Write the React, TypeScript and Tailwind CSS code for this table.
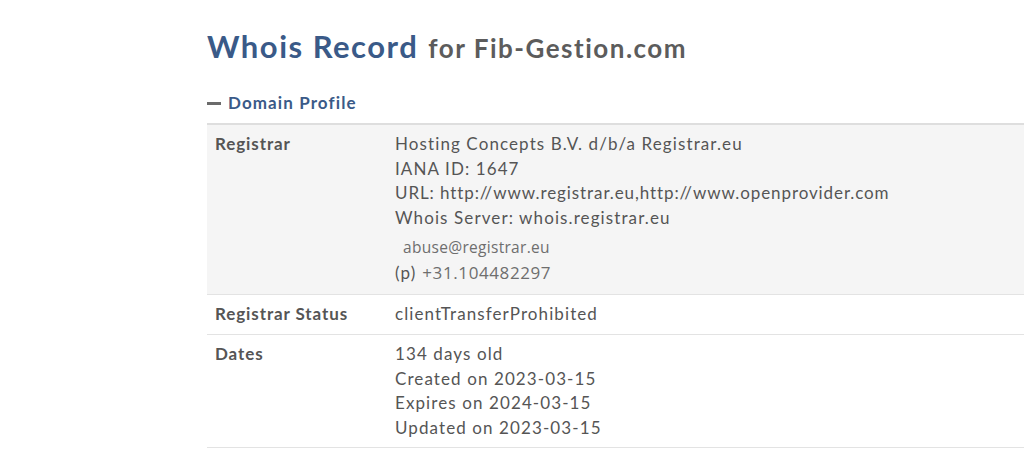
const rows = [
  {
    label: "Registrar Status",
    lines: ["clientTransferProhibited"],
  },
  {
    label: "Dates",
    lines: [
      "134 days old",
      "Created on 2023-03-15",
      "Expires on 2024-03-15",
      "Updated on 2023-03-15",
    ],
  },
];

export default function App() {
  return (
    <div className="min-h-[449px] bg-white font-['Lato',sans-serif] text-[#555]">
      <div className="ml-[207px] pt-[26px]">
        {/* page title */}
        <h1 className="flex items-baseline gap-[10px] leading-[40px]">
          <span className="text-[31px] font-bold tracking-[1.5px] text-[#3a5a88]">Whois Record</span>
          <span className="text-[26px] font-bold tracking-[1.5px] text-[#5c5c5c]">for Fib-Gestion.com</span>
        </h1>

        {/* section toggle */}
        <div className="mt-[25px] flex items-center gap-[7px] text-[17px] font-bold tracking-[1.1px] text-[#3a5a88] leading-[20px]">
          <span className="block h-[3px] w-[14px] bg-[#6b6b6b]" />
          <span>Domain Profile</span>
        </div>

        <div className="mt-[10px] border-t-2 border-[#dedede] text-[17px] tracking-[1.1px]">
          {/* Registrar row */}
          <div className="flex bg-[#f5f5f5] border-b border-[#e3e3e3] pt-[7px] pb-[8px]">
            <div className="w-[188px] shrink-0 pl-[8px] font-bold tracking-[0.9px] leading-[24.6px]">Registrar</div>
            <div className="leading-[24.6px]">
              <div>Hosting Concepts B.V. d/b/a Registrar.eu</div>
              <div>IANA ID: 1647</div>
              <div className="tracking-[0.9px]">URL: http://www.registrar.eu,http://www.openprovider.com</div>
              <div>Whois Server: whois.registrar.eu</div>
              <div className="mt-[5px] pl-[8px] font-['Open_Sans',sans-serif] text-[15.5px] tracking-[0.3px] text-[#6e6e6e] leading-[24px]">
                abuse@registrar.eu
              </div>
              <div className="flex items-center leading-[27px]">
                <span>(p)</span>
                <span className="ml-[6px] font-['Open_Sans',sans-serif] text-[17px] tracking-[0.6px] text-[#6e6e6e]">+31.104482297</span>
              </div>
            </div>
          </div>

          {rows.map((row) => (
            <div key={row.label} className="flex border-b border-[#e3e3e3] pt-[7px] pb-[7px]">
              <div className="w-[188px] shrink-0 pl-[8px] font-bold tracking-[0.9px] leading-[24.6px]">{row.label}</div>
              <div className="leading-[24.6px]">
                {row.lines.map((l) => (
                  <div key={l}>{l}</div>
                ))}
              </div>
            </div>
          ))}
        </div>
      </div>
    </div>
  );
}
